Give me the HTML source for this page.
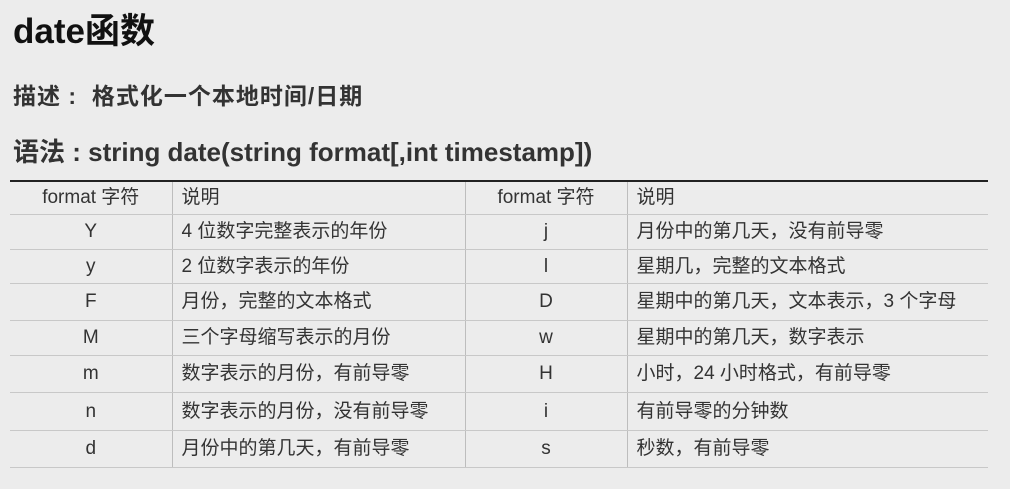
<!DOCTYPE html><html><head><meta charset="utf-8"><style>
body{margin:0;width:1010px;height:489px;background:#ececec;font-family:"Liberation Sans","Noto Sans CJK SC",sans-serif;color:#222;position:relative;overflow:hidden}
.t{position:absolute;left:13px;font-weight:bold;white-space:nowrap;line-height:1}
table{position:absolute;left:10px;top:180px;width:978px;border-collapse:collapse;font-size:19px;color:#333}
table tr:first-child td{border-top:2px solid #222}
td{border-bottom:1px solid #c8c8c8;border-left:1px solid #bdbdbd;padding:0;white-space:nowrap;vertical-align:middle;line-height:20px;padding-top:1px}
td:first-child{border-left:none}
td.c{text-align:center}
td.d{padding-left:9px}
</style></head><body>
<div class="t" style="top:14px;font-size:35px;color:#111">date函数</div>
<div class="t" style="top:85px;font-size:23px;color:#333;letter-spacing:1px">描述&nbsp;:&nbsp;&nbsp;格式化一个本地时间/日期</div>
<div class="t" style="top:139px;font-size:26px;color:#333">语法 : string date(string format[,int timestamp])</div>
<table>
<colgroup><col style="width:162px"><col style="width:293px"><col style="width:162px"><col></colgroup>
<tr style="height:33px"><td class="c">format 字符</td><td class="d">说明</td><td class="c">format 字符</td><td class="d">说明</td></tr>
<tr style="height:35px"><td class="c">Y</td><td class="d">4 位数字完整表示的年份</td><td class="c">j</td><td class="d">月份中的第几天，没有前导零</td></tr>
<tr style="height:34px"><td class="c">y</td><td class="d">2 位数字表示的年份</td><td class="c">l</td><td class="d">星期几，完整的文本格式</td></tr>
<tr style="height:37px"><td class="c">F</td><td class="d">月份，完整的文本格式</td><td class="c">D</td><td class="d">星期中的第几天，文本表示，3 个字母</td></tr>
<tr style="height:35px"><td class="c">M</td><td class="d">三个字母缩写表示的月份</td><td class="c">w</td><td class="d">星期中的第几天，数字表示</td></tr>
<tr style="height:37px"><td class="c">m</td><td class="d">数字表示的月份，有前导零</td><td class="c">H</td><td class="d">小时，24 小时格式，有前导零</td></tr>
<tr style="height:38px"><td class="c">n</td><td class="d">数字表示的月份，没有前导零</td><td class="c">i</td><td class="d">有前导零的分钟数</td></tr>
<tr style="height:37px"><td class="c">d</td><td class="d">月份中的第几天，有前导零</td><td class="c">s</td><td class="d">秒数，有前导零</td></tr>
</table>
</body></html>
